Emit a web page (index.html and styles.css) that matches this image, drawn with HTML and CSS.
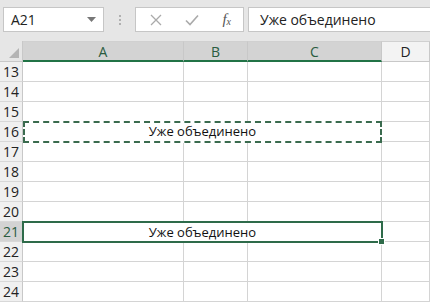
FILE: index.html
```html
<!DOCTYPE html>
<html lang="ru">
  <head>
    <meta charset="utf-8" />
    <title>Excel</title>
    <link rel="stylesheet" href="styles.css">
  </head>
  <body>
    <div class="toolbar">
      <div class="namebox">
        <span>A21</span>
        <svg class="drop" width="9" height="5" viewBox="0 0 9 5"><path d="M0 0h9L4.5 5z" fill="#777"/></svg>
      </div>
      <div class="dots"><i></i><i></i><i></i></div>
      <div class="fbtns">
        <svg width="12" height="12" viewBox="0 0 12 12"><path d="M1 1l10 10M11 1L1 11" stroke="#aaa" stroke-width="1.3"/></svg>
        <svg width="14" height="12" viewBox="0 0 14 12"><path d="M1 6.5l4 4L13 1.5" stroke="#aaa" stroke-width="1.6" fill="none"/></svg>
        <span class="fx">f<sub>x</sub></span>
      </div>
      <div class="finput">Уже объединено</div>
    </div>

    <div class="sheet">
      <div class="corner"><svg width="10" height="10" viewBox="0 0 10 10"><path d="M10 0v10H0z" fill="#b4b4b4"/></svg></div>
      <div class="col sel">A</div>
      <div class="col sel">B</div>
      <div class="col sel">C</div>
      <div class="col">D</div>

      <div class="rh">13</div><div class="c"></div><div class="c"></div><div class="c"></div><div class="c"></div>
      <div class="rh">14</div><div class="c"></div><div class="c"></div><div class="c"></div><div class="c"></div>
      <div class="rh">15</div><div class="c"></div><div class="c"></div><div class="c"></div><div class="c"></div>
      <div class="rh">16</div><div class="c merged copied">Уже объединено</div><div class="c"></div>
      <div class="rh">17</div><div class="c"></div><div class="c"></div><div class="c"></div><div class="c"></div>
      <div class="rh">18</div><div class="c"></div><div class="c"></div><div class="c"></div><div class="c"></div>
      <div class="rh">19</div><div class="c"></div><div class="c"></div><div class="c"></div><div class="c"></div>
      <div class="rh">20</div><div class="c"></div><div class="c"></div><div class="c"></div><div class="c"></div>
      <div class="rh sel">21</div><div class="c merged active">Уже объединено<span class="handle"></span></div><div class="c"></div>
      <div class="rh">22</div><div class="c"></div><div class="c"></div><div class="c"></div><div class="c"></div>
      <div class="rh">23</div><div class="c"></div><div class="c"></div><div class="c"></div><div class="c"></div>
      <div class="rh">24</div><div class="c"></div><div class="c"></div><div class="c"></div><div class="c"></div>
    </div>
  </body>
</html>
```

FILE: styles.css
```css
body{
    margin: 0;
    font-family: "Open Sans", "Noto Sans", sans-serif;
    color: #222;
    background: #fff;
    overflow: hidden;
}

.toolbar{
    height: 40px;
    background: #e6e6e6;
    display: flex;
    align-items: flex-start;
    padding: 7px 0 0 3px;
    box-sizing: border-box;
}

.namebox{
    width: 101px;
    height: 25px;
    box-sizing: border-box;
    background: #fff;
    border: 1px solid #c6c6c6;
    display: flex;
    align-items: center;
    justify-content: space-between;
    padding: 0 7px 0 7px;
    font-size: 14px;
}

.dots{
    width: 31px;
    height: 25px;
    display: flex;
    flex-direction: column;
    align-items: center;
    justify-content: center;
    gap: 2px;
}

.dots i{
    width: 2px;
    height: 2px;
    background: #b0b0b0;
}

.fbtns{
    width: 109px;
    height: 25px;
    box-sizing: border-box;
    background: #fff;
    border: 1px solid #c6c6c6;
    display: flex;
    align-items: center;
    justify-content: space-between;
    padding: 0 12px 0 14px;
}

.fx{
    font-family: "Liberation Serif", serif;
    font-style: italic;
    font-size: 15px;
    color: #555;
}

.fx sub{
    font-size: 10px;
    vertical-align: -1px;
}

.finput{
    margin-left: 4px;
    flex: 1;
    height: 25px;
    box-sizing: border-box;
    background: #fff;
    border: 1px solid #c6c6c6;
    border-right: none;
    padding-left: 11px;
    line-height: 23px;
    font-size: 14px;
}

.sheet{
    position: relative;
    display: grid;
    grid-template-columns: 23px 161px 64px 134px 1fr;
    grid-template-rows: 22px repeat(12, 20px);
    background: #e6e6e6;
}

.corner{
    background: #e6e6e6;
    border-right: 1px solid #c8c8c8;
    border-bottom: 1px solid #c8c8c8;
    display: flex;
    align-items: flex-end;
    justify-content: flex-end;
    padding: 0 3px 3px 0;
    margin-top: 1px;
}

.col{
    background: #f3f3f3;
    border-right: 1px solid #c8c8c8;
    border-bottom: 1px solid #c8c8c8;
    border-top: 1px solid #d0d0d0;
    text-align: center;
    font-size: 14px;
    line-height: 20px;
    color: #222;
    margin-top: 1px;
}

.col.sel{
    background: #d3d3d3;
    border-bottom: 2px solid #217346;
    color: #2a5c40;
}

.rh{
    background: #f0f0f0;
    border-right: 1px solid #c8c8c8;
    border-bottom: 1px solid #d8d8d8;
    font-size: 14px;
    line-height: 19px;
    text-align: center;
    color: #222;
}

.rh.sel{
    background: #d3d3d3;
    color: #2a5c40;
}

.c{
    background: #fff;
    border-right: 1px solid #d4d4d4;
    border-bottom: 1px solid #d4d4d4;
}

.merged{
    grid-column: span 3;
    text-align: center;
    font-size: 13px;
    line-height: 19px;
    position: relative;
    color: #111;
}

.copied{
    border: 2px dashed #3a6b4e;
    margin: -1px 0 -1px 0;
    line-height: 17px;
}

.active{
    border: 2px solid #2e6b4a;
    margin: -1px -1px -1px -1px;
    line-height: 18px;
}

.handle{
    position: absolute;
    right: -4px;
    bottom: -4px;
    width: 5px;
    height: 5px;
    background: #2e6b4a;
    border: 1px solid #fff;
}
```
